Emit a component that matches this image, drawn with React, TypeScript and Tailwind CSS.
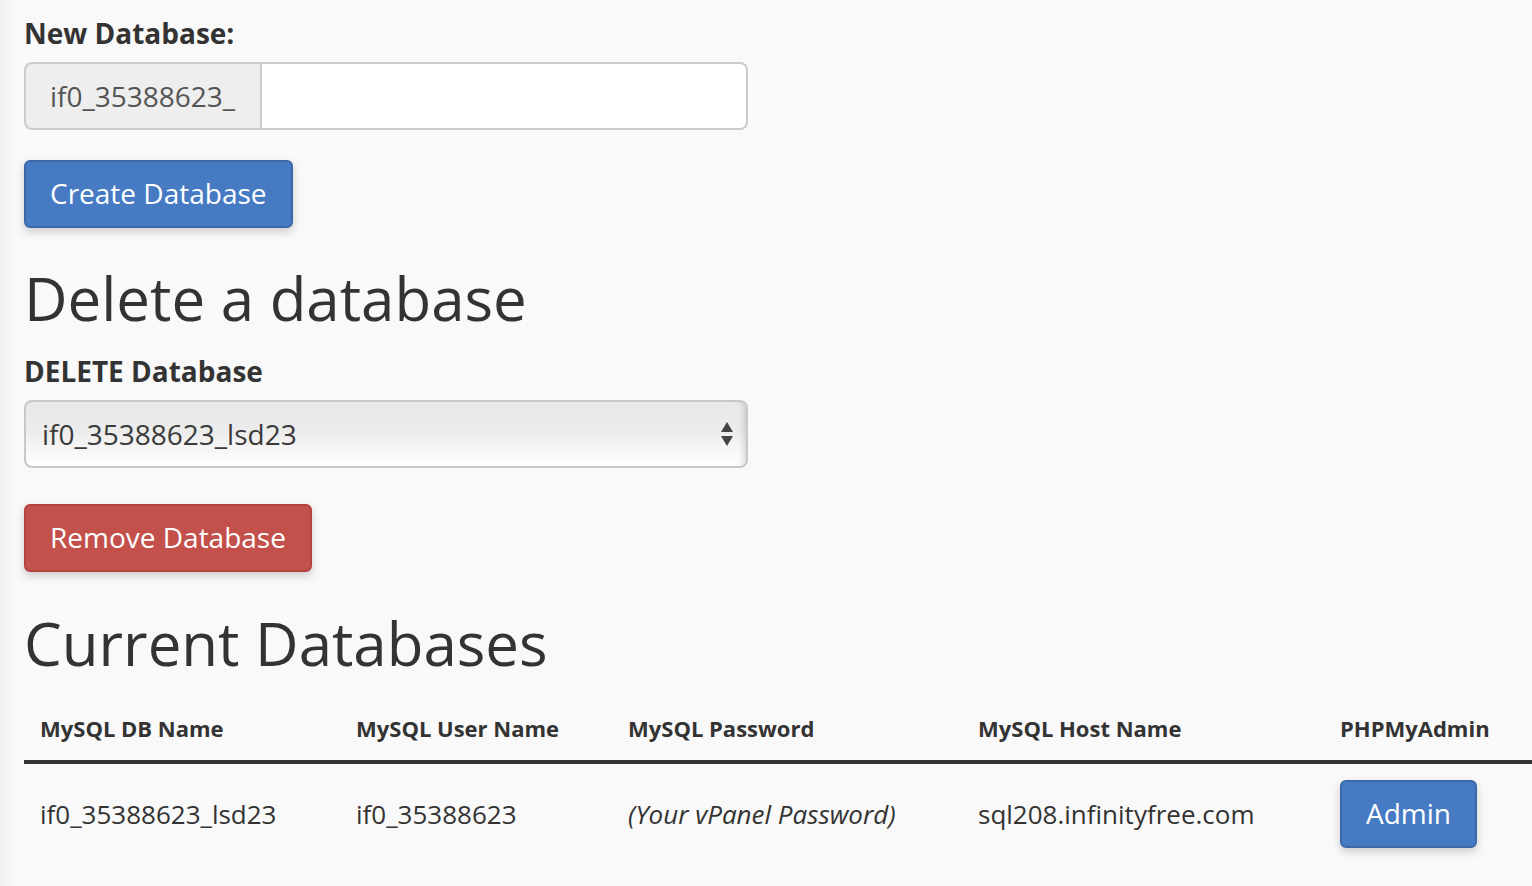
const DB_PREFIX = 'if0_35388623_'

const columns = [
  { label: 'MySQL DB Name', width: 'w-[316px]' },
  { label: 'MySQL User Name', width: 'w-[272px]' },
  { label: 'MySQL Password', width: 'w-[350px]' },
  { label: 'MySQL Host Name', width: 'w-[362px]' },
  { label: 'PHPMyAdmin', width: '' },
]

function SelectArrows() {
  return (
    <svg width="14" height="26" viewBox="0 0 14 26" className="shrink-0">
      <path d="M7 1 L13 11 L1 11 Z" fill="#444" />
      <path d="M1 15 L13 15 L7 25 Z" fill="#444" />
    </svg>
  )
}

function App() {
  return (
    <main className="min-h-screen bg-[#f9f9f9] bg-[linear-gradient(to_right,#efefef,#f9f9f9_16px)] pl-6 pt-[13px] font-['Open_Sans',sans-serif] text-[#333]">
      <label className="block text-[28px] font-bold leading-[40px]">New Database:</label>
      <div className="mt-[9px] flex h-[68px] w-[724px]">
        <span className="flex w-[238px] items-center rounded-l-[8px] border-2 border-[#ccc] bg-[#eee] pl-6 text-[28px] text-[#555]">
          {DB_PREFIX}
        </span>
        <input
          type="text"
          className="flex-1 rounded-r-[8px] border-2 border-l-0 border-[#ccc] bg-white px-6 text-[28px] outline-none"
        />
      </div>

      <button
        type="button"
        className="mt-[30px] block h-[68px] rounded-[6px] border-2 border-[#3a68a8] bg-[#467bc4] px-6 pb-[2px] text-[28px] leading-none text-white shadow-[0_4px_10px_rgba(0,0,0,0.18)]"
      >
        Create Database
      </button>

      <h2 className="mt-[37px] text-[60px] font-normal leading-[66px]">Delete a database</h2>

      <label className="mt-5 block text-[28px] font-bold leading-[40px]">DELETE Database</label>
      <div className="mt-[9px] flex h-[68px] w-[724px] items-center justify-between rounded-[8px] border-2 border-[#c8c8c8] bg-[linear-gradient(to_bottom,#e8e8e8,#ececec_45%,#ffffff)] pl-4 pr-[12px] shadow-[inset_-8px_0_6px_-6px_rgba(0,0,0,0.15)]">
        <span className="text-[28px] text-[#3a3a3a]">if0_35388623_lsd23</span>
        <SelectArrows />
      </div>

      <button
        type="button"
        className="mt-9 block h-[68px] rounded-[6px] border-2 border-[#b2433e] bg-[#c3504b] px-6 pb-[2px] text-[28px] leading-none text-white shadow-[0_4px_10px_rgba(0,0,0,0.18)]"
      >
        Remove Database
      </button>

      <h2 className="mt-[38px] text-[60px] font-normal leading-[66px]">Current Databases</h2>

      <table className="mt-5 w-[1508px] table-fixed border-collapse">
        <thead>
          <tr className="border-b-4 border-[#333]">
            {columns.map((col) => (
              <th
                key={col.label}
                className={`${col.width} p-4 text-left text-[22px] font-bold leading-[32px]`}
              >
                {col.label}
              </th>
            ))}
          </tr>
        </thead>
        <tbody>
          <tr className="text-[26px] leading-[40px]">
            <td className="p-4 align-middle">if0_35388623_lsd23</td>
            <td className="p-4 align-middle">if0_35388623</td>
            <td className="p-4 align-middle italic">(Your vPanel Password)</td>
            <td className="p-4 align-middle">sql208.infinityfree.com</td>
            <td className="p-4 align-middle">
              <button
                type="button"
                className="h-[68px] rounded-[6px] border-2 border-[#3a68a8] bg-[#467bc4] px-6 pb-[2px] text-[28px] leading-none text-white shadow-[0_4px_10px_rgba(0,0,0,0.18)]"
              >
                Admin
              </button>
            </td>
          </tr>
        </tbody>
      </table>
    </main>
  )
}

export default App
